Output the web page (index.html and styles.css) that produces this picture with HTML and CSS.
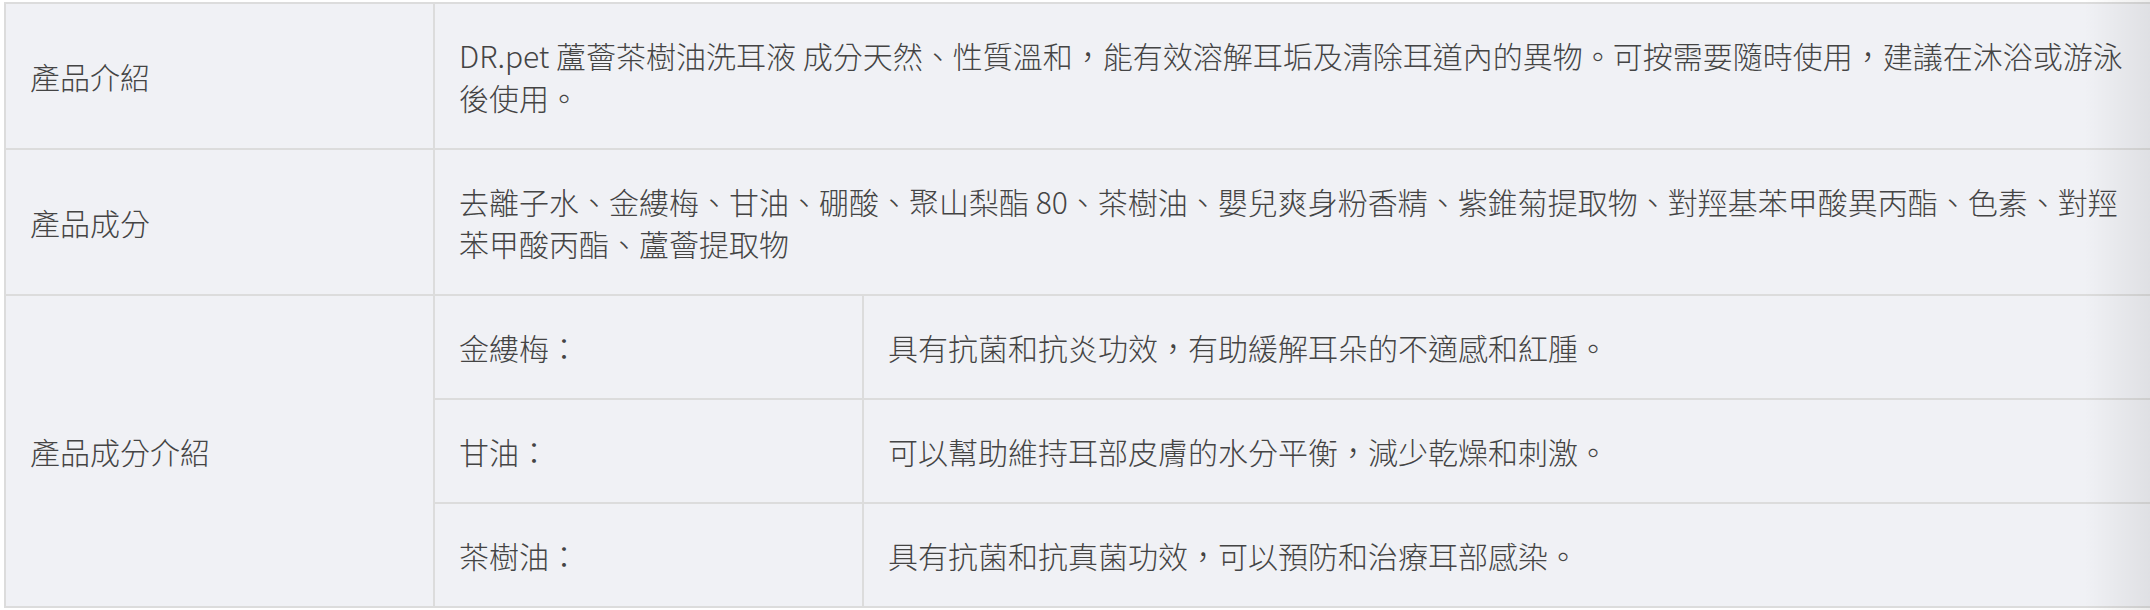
FILE: index.html
```html
<!DOCTYPE html>
<html lang="zh-Hant">
<head>
<meta charset="utf-8">
<title>產品資料</title>
<link rel="stylesheet" href="styles.css">
</head>
<body>
<div class="scroller">
  <div class="spec">
    <div class="cell label">產品介紹</div>
    <div class="cell wide">DR.pet 蘆薈茶樹油洗耳液 成分天然、性質溫和，能有效溶解耳垢及清除耳道內的異物。可按需要隨時使用，建議在沐浴或游泳後使用。</div>
    <div class="cell label">產品成分</div>
    <div class="cell wide">去離子水、金縷梅、甘油、硼酸、聚山梨酯 80、茶樹油、嬰兒爽身粉香精、紫錐菊提取物、對羥基苯甲酸異丙酯、色素、對羥苯甲酸丙酯、蘆薈提取物</div>
    <div class="cell label tall">產品成分介紹</div>
    <div class="cell">金縷梅：</div>
    <div class="cell">具有抗菌和抗炎功效，有助緩解耳朵的不適感和紅腫。</div>
    <div class="cell">甘油：</div>
    <div class="cell">可以幫助維持耳部皮膚的水分平衡，減少乾燥和刺激。</div>
    <div class="cell">茶樹油：</div>
    <div class="cell">具有抗菌和抗真菌功效，可以預防和治療耳部感染。</div>
  </div>
  <div class="edge-shadow"></div>
</div>
</body>
</html>
```

FILE: styles.css
```css
html, body {
  margin: 0;
  padding: 0;
  background: #ffffff;
}

body {
  font-family: "Noto Sans CJK TC", "Noto Sans", sans-serif;
  color: #444444;
}

.scroller {
  position: relative;
  width: 2150px;
  height: 610px;
  overflow: hidden;
  padding: 2px 0 0 4px;
  box-sizing: border-box;
}

.spec {
  display: grid;
  grid-template-columns: 427px 427px 1fr;
  gap: 2px;
  padding: 2px;
  width: 2158px;
  box-sizing: border-box;
  background: #dcdcdc;
}

.cell {
  display: flex;
  align-items: center;
  background: #f0f1f5;
  padding: 30px 24px;
  font-size: 30px;
  line-height: 42px;
  font-weight: 300;
  min-width: 0;
}

.wide {
  grid-column: 2 / 4;
  display: block;
}

.tall {
  grid-row: 3 / 6;
}

.edge-shadow {
  position: absolute;
  top: 0;
  right: 0;
  width: 66px;
  height: 100%;
  background: linear-gradient(to right, rgba(0, 0, 0, 0), rgba(0, 0, 0, 0.07));
  pointer-events: none;
}
```
